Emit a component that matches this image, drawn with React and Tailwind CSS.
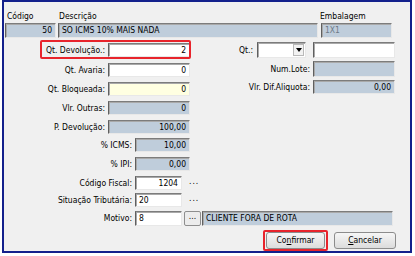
import React from "react";

const sunken =
  "border border-t-[#7c7c7c] border-l-[#5f5f5f] border-r-[#e8e8e8] border-b-[#e8e8e8] shadow-[inset_1px_1px_0_#a9a9a9]";
const grey = "bg-[#bfcddb]";

const Field = ({ value = "", w, bg = "bg-white", align = "text-right", h = "h-[14px]" }) => (
  <div className={`${w} ${h} ${bg} ${sunken} ${align} px-[3px] leading-[12px] text-[8.5px] text-black overflow-hidden whitespace-nowrap`}>
    {value}
  </div>
);

const Row = ({ label, labelW, children }) => (
  <div className="flex items-center h-[14px]">
    <div className={`${labelW} text-right pr-[3px] text-[8.5px] whitespace-nowrap`}>{label}</div>
    {children}
  </div>
);

const Dots = () => <span className="ml-[7px] text-[8.5px] tracking-[1px] -mt-[3px]">...</span>;

export default function App() {
  return (
    <div className="w-[415px] h-[256px] bg-white pl-[2px] pr-[3px] pb-[3px] font-['DejaVu_Sans_Condensed','DejaVu_Sans',sans-serif] text-black">
      <div className="h-full border-2 border-[#13208c] bg-[#f0f0f0] pl-[1px] pr-[2px]">
        {/* header */}
        <div className="flex text-[8.5px] mt-[8px] h-[12px] leading-[12px]">
          <div className="w-[54px] pl-[2px]">Código</div>
          <div className="w-[261px]">Descrição</div>
          <div>Embalagem</div>
        </div>
        <div className="flex mt-[1px]">
          <Field w="w-[51px]" h="h-[15px]" bg={grey} value="50" />
          <div className="ml-[2px]">
            <Field w="w-[260px]" h="h-[15px]" bg={grey} align="text-left" value="SO ICMS 10% MAIS NADA" />
          </div>
          <div className="ml-[3px]">
            <Field w="w-[71px]" h="h-[15px]" bg={grey} align="text-left" value={<span className="text-[#6e7a88]">1X1</span>} />
          </div>
        </div>

        <div className="flex mt-[4px]">
          {/* left column */}
          <div className="w-[200px] flex flex-col">
            <div className="relative mt-[1px]">
              <Row label="Qt. Devolução.:" labelW="w-[103px]">
                <Field w="w-[82px]" value="2" />
              </Row>
              <div className="absolute left-[35px] -top-[3px] w-[151px] h-[19px] border-2 border-[#e8242c] rounded-[2px]" />
            </div>
            <div className="mt-[6px]">
              <Row label="Qt. Avaria:" labelW="w-[103px]">
                <Field w="w-[82px]" value="0" />
              </Row>
            </div>
            <div className="mt-[5px]">
              <Row label="Qt. Bloqueada:" labelW="w-[103px]">
                <Field w="w-[82px]" bg="bg-[#ffffe1]" value="0" />
              </Row>
            </div>
            <div className="mt-[5px]">
              <Row label="Vlr. Outras:" labelW="w-[103px]">
                <Field w="w-[82px]" bg={grey} value="0" />
              </Row>
            </div>
            <div className="mt-[5px]">
              <Row label="P. Devolução:" labelW="w-[103px]">
                <Field w="w-[82px]" bg={grey} value="100,00" />
              </Row>
            </div>
            <div className="mt-[4px]">
              <Row label="% ICMS:" labelW="w-[130px]">
                <Field w="w-[55px]" bg={grey} value="10,00" />
              </Row>
            </div>
            <div className="mt-[5px]">
              <Row label="% IPI:" labelW="w-[130px]">
                <Field w="w-[55px]" bg={grey} value="0,00" />
              </Row>
            </div>
            <div className="mt-[5px]">
              <Row label="Código Fiscal:" labelW="w-[130px]">
                <Field w="w-[47px]" value="1204" />
                <Dots />
              </Row>
            </div>
            <div className="mt-[3px]">
              <Row label="Situação Tributária:" labelW="w-[130px]">
                <Field w="w-[47px]" align="text-left" value="20" />
                <Dots />
              </Row>
            </div>
          </div>

          {/* right column */}
          <div className="flex-1 flex flex-col items-end pr-[13px]">
            <div className="flex items-center h-[16px]">
              <span className="text-[8.5px] mr-[4px]">Qt.:</span>
              <div className={`w-[49px] h-[16px] bg-white ${sunken} flex justify-end items-center`}>
                <div className="w-[11px] h-[12px] mr-[1px] bg-[#f2f2f2] border border-[#b9b9b9] flex items-center justify-center">
                  <svg width="6" height="4" viewBox="0 0 6 4"><path d="M0 0H6L3 4Z" fill="#000" /></svg>
                </div>
              </div>
              <div className="ml-[7px]">
                <Field w="w-[82px]" h="h-[16px]" value="" />
              </div>
            </div>
            <div className="flex items-center mt-[3px]">
              <span className="text-[8.5px] mr-[3px]">Num.Lote:</span>
              <Field w="w-[82px]" h="h-[16px]" bg={grey} value="" />
            </div>
            <div className="flex items-center mt-[3px]">
              <span className="text-[8.5px] mr-[3px]">Vlr. Dif.Aliquota:</span>
              <Field w="w-[82px]" bg={grey} value="0,00" />
            </div>
          </div>
        </div>

        {/* motivo */}
        <div className="flex items-center mt-[4px]">
          <div className="w-[130px] text-right pr-[3px] text-[8.5px]">Motivo:</div>
          <Field w="w-[47px]" h="h-[15px]" align="text-left" value="8" />
          <div className="ml-[2px] w-[17px] h-[15px] border border-[#8e8e8e] rounded-[2px] bg-[#ececec] text-[8.5px] text-center leading-[9px]">...</div>
          <div className="ml-px">
            <Field w="w-[191px]" h="h-[15px]" bg={grey} align="text-left" value="CLIENTE FORA DE ROTA" />
          </div>
        </div>

        {/* buttons */}
        <div className="flex items-start justify-end pr-[12px] mt-[4px]">
          <div className="flex border-2 border-[#e8242c] rounded-[2px] px-px">
            <button className="w-[59px] h-[17px] rounded-[3px] border border-[#8c8c8c] bg-gradient-to-b from-[#f6f6f6] to-[#dcdcdc] text-[8.5px] leading-[15px]">
              Co<span className="underline">n</span>firmar
            </button>
          </div>
          <button className="ml-[6px] mt-[2px] w-[62px] h-[17px] rounded-[3px] border border-[#8c8c8c] bg-gradient-to-b from-[#f6f6f6] to-[#dcdcdc] text-[8.5px] leading-[15px]">
            <span className="underline">C</span>ancelar
          </button>
        </div>
      </div>
    </div>
  );
}
